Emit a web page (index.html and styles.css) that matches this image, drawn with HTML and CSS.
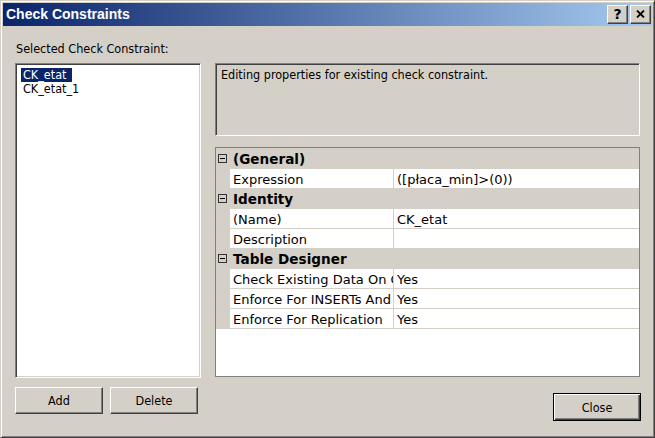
FILE: index.html
```html
<!DOCTYPE html>
<html lang="en">
<head>
<meta charset="utf-8">
<title>Check Constraints</title>
<link rel="stylesheet" href="styles.css">
</head>
<body>
<div class="window">
  <div class="titlebar">
    <span class="title">Check Constraints</span>
    <div class="tbtns">
      <span class="tbtn help">?</span>
      <span class="tbtn">
        <svg class="xicon" width="9" height="8" viewBox="0 0 9 8"><path d="M1 0.5 L8 7.5 M8 0.5 L1 7.5" stroke="#000" stroke-width="1.8" fill="none"/></svg>
      </span>
    </div>
  </div>
  <div class="body">
    <div class="label">Selected Check Constraint:</div>
    <div class="left">
      <div class="listbox">
        <div class="item"><span class="sel">CK_etat</span></div>
        <div class="item"><span class="plain">CK_etat_1</span></div>
      </div>
      <div class="btnrow">
        <button class="btn">Add</button>
        <button class="btn">Delete</button>
      </div>
    </div>
    <div class="right">
      <div class="desc">Editing properties for existing check constraint.</div>
      <div class="grid">
        <div class="cat"><span class="toggle"></span><span class="cat-name">(General)</span></div>
        <div class="prop"><span class="gutter"></span><span class="pname">Expression</span><span class="pval">([płaca_min]&gt;(0))</span></div>
        <div class="cat"><span class="toggle"></span><span class="cat-name">Identity</span></div>
        <div class="prop"><span class="gutter"></span><span class="pname">(Name)</span><span class="pval">CK_etat</span></div>
        <div class="prop"><span class="gutter"></span><span class="pname">Description</span><span class="pval"></span></div>
        <div class="cat"><span class="toggle"></span><span class="cat-name">Table Designer</span></div>
        <div class="prop"><span class="gutter"></span><span class="pname">Check Existing Data On Creation Or Re-Enabling</span><span class="pval">Yes</span></div>
        <div class="prop"><span class="gutter"></span><span class="pname">Enforce For INSERTs And UPDATEs</span><span class="pval">Yes</span></div>
        <div class="prop last"><span class="gutter"></span><span class="pname">Enforce For Replication</span><span class="pval">Yes</span></div>
      </div>
      <button class="btn default">Close</button>
    </div>
  </div>
</div>
</body>
</html>
```

FILE: styles.css
```css
* { box-sizing: border-box; }
html, body { margin: 0; padding: 0; }
body {
  background: #d4d0c8;
  font-family: "DejaVu Sans Condensed", "DejaVu Sans", Verdana, sans-serif;
  font-stretch: condensed;
  font-size: 12.5px;
  color: #000;
}
.window {
  width: 655px;
  height: 438px;
  border: 1px solid;
  border-color: #d4d0c8 #404040 #404040 #d4d0c8;
  box-shadow: inset 1px 1px #fff, inset -1px -1px #808080;
  padding: 2px;
  background: #d4d0c8;
  display: flex;
  flex-direction: column;
}
.titlebar {
  height: 23px;
  background: linear-gradient(to right, #0a246a, #a6caf0);
  display: flex;
  align-items: center;
  justify-content: space-between;
  padding-left: 3px;
  padding-right: 1px;
}
.title {
  font-family: "Liberation Sans", Arial, sans-serif;
  font-stretch: normal;
  font-weight: bold;
  font-size: 14px;
  color: #fff;
  line-height: 23px;
}
.tbtns { display: flex; gap: 2px; }
.tbtn {
  width: 21px;
  height: 19px;
  background: #d4d0c8;
  border: 1px solid;
  border-color: #fff #404040 #404040 #fff;
  box-shadow: inset -1px -1px #808080;
  display: flex;
  align-items: center;
  justify-content: center;
}
.help {
  font-family: "DejaVu Sans", sans-serif;
  font-stretch: normal;
  font-weight: bold;
  font-size: 14px;
  line-height: 17px;
  padding-bottom: 1px;
}
.xicon { display: block; margin-top: -1px; }
.body {
  flex: 1;
  display: grid;
  grid-template-columns: 186px 425px;
  grid-template-rows: auto 1fr;
  column-gap: 14px;
  padding: 15px 12px 0 12px;
}
.label {
  grid-column: 1;
  grid-row: 1;
  line-height: 15px;
  margin-bottom: 7px;
  padding-left: 1px;
}
.left {
  grid-column: 1;
  grid-row: 2;
  display: flex;
  flex-direction: column;
}
.listbox {
  height: 315px;
  background: #fff;
  border: 1px solid;
  border-color: #808080 #fff #fff #808080;
  box-shadow: inset 1px 1px #404040, inset -1px -1px #d4d0c8;
  padding: 4px 0 0 5px;
}
.item { line-height: 14px; height: 14px; }
.sel, .plain { padding: 0 6px 0 2px; display: inline-block; }
.sel { background: #0a246a; color: #fff; }
.btnrow {
  display: flex;
  gap: 7px;
  margin-top: 9px;
}
.btn {
  font-family: "DejaVu Sans Condensed", "DejaVu Sans", Verdana, sans-serif;
  font-stretch: condensed;
  font-size: 12.5px;
  color: #000;
  width: 88px;
  height: 27px;
  background: #d4d0c8;
  border: 1px solid;
  border-color: #fff #404040 #404040 #fff;
  box-shadow: inset -1px -1px #808080;
  padding: 0;
  margin: 0;
}
.btn.default {
  height: 28px;
  border: 1px solid #000;
  box-shadow: inset 1px 1px #fff, inset -1px -1px #404040, inset -2px -2px #808080;
  align-self: flex-end;
  margin-top: 16px;
  margin-right: -1px;
}
.right {
  grid-column: 2;
  grid-row: 2;
  display: flex;
  flex-direction: column;
}
.desc {
  height: 73px;
  border: 1px solid;
  border-color: #808080 #fff #fff #808080;
  box-shadow: inset 1px 1px #404040, inset -1px -1px #d4d0c8;
  padding: 3px 5px;
  line-height: 15px;
}
.grid {
  height: 230px;
  margin-top: 11px;
  border: 1px solid #808080;
  background: #fff;
  overflow: hidden;
  font-family: "DejaVu Sans", Verdana, sans-serif;
  font-stretch: normal;
  font-size: 13px;
}
.cat {
  height: 20px;
  background: #d4d0c8;
  display: flex;
  align-items: flex-start;
  overflow: hidden;
}
.toggle {
  width: 9px;
  height: 9px;
  margin: 6px 0 0 2px;
  border: 1px solid #333;
  position: relative;
  flex: none;
}
.toggle::after {
  content: "";
  position: absolute;
  left: 1px;
  top: 3px;
  width: 5px;
  height: 1px;
  background: #000;
}
.cat-name {
  font-weight: bold;
  font-size: 13.6px;
  line-height: 22px;
  height: 20px;
  margin-left: 6px;
  white-space: nowrap;
}
.prop {
  height: 20px;
  display: flex;
  border-top: 1px solid #d4d0c8;
}
.prop.last { height: 21px; border-bottom: 1px solid #d4d0c8; }
.gutter {
  width: 14px;
  flex: none;
  background: #d4d0c8;
}
.pname, .pval {
  height: 19px;
  line-height: 21px;
  white-space: nowrap;
  overflow: hidden;
}
.pname {
  width: 164px;
  flex: none;
  padding-left: 3px;
  border-right: 1px solid #d4d0c8;
}
.pval {
  flex: 1;
  padding-left: 3px;
}
```
